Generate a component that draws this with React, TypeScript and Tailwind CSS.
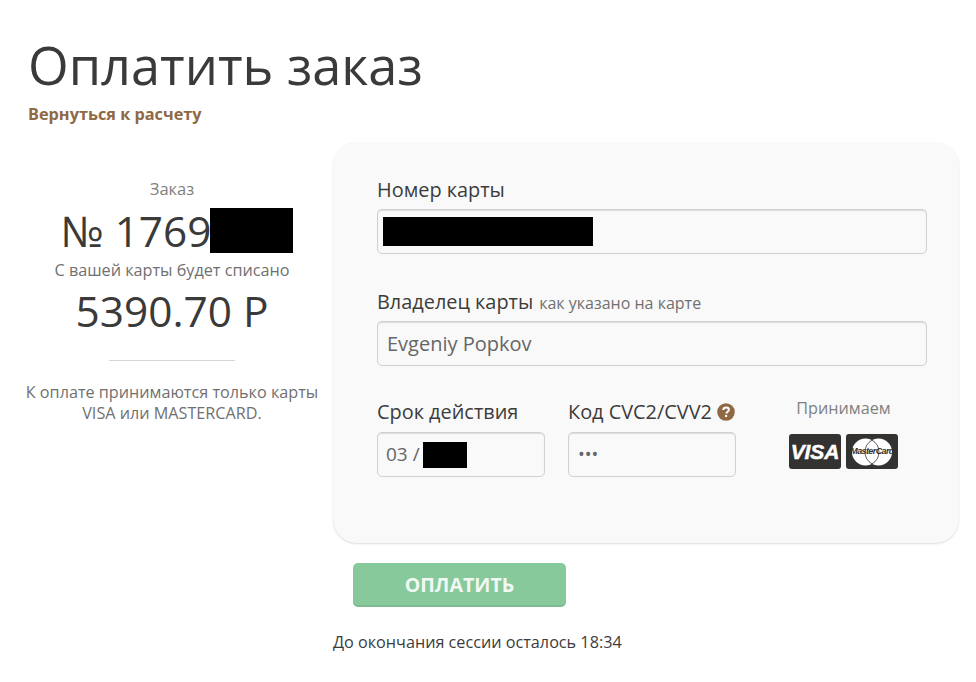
const Redact = ({ className }: { className: string }) => <div className={`bg-black ${className}`} />;

function Field({ children, className }: { children: React.ReactNode; className: string }) {
  return (
    <div className={`flex h-[45px] items-center rounded-[5px] border border-[#d0d0d0] bg-[#f9f9f9] shadow-[inset_0_1px_1px_rgba(0,0,0,0.12)] ${className}`}>
      {children}
    </div>
  );
}

function VisaCard() {
  return (
    <div className="flex h-[35px] w-[52px] items-center justify-center rounded-[3px] bg-[#333231]">
      <span className="text-[21px] leading-none font-bold italic tracking-[-0.1px] text-white [-webkit-text-stroke:0.5px_white] font-['Liberation_Sans',sans-serif]">VISA</span>
    </div>
  );
}

function MasterCard() {
  return (
    <div className="relative flex h-[35px] w-[52px] items-center justify-center rounded-[3px] bg-[#333231]">
      <svg width="44" height="30" viewBox="0 0 44 30" className="absolute">
        <circle cx="15.5" cy="15" r="13.5" fill="#fff" />
        <circle cx="28.5" cy="15" r="13.5" fill="#fff" />
        <path d="M22 3.2a13.5 13.5 0 0 1 0 23.6a13.5 13.5 0 0 1 0-23.6z" fill="#fff" stroke="#333231" strokeWidth="0.8" />
      </svg>
      <span className="relative text-[9px] leading-none font-bold italic tracking-[-0.6px] text-[#333231] font-['Liberation_Sans',sans-serif]">MasterCard</span>
    </div>
  );
}

export default function App() {
  return (
    <div className="min-h-[682px] w-[976px] bg-white font-['Open_Sans',sans-serif] text-[#3c3c3c]">
      <div className="pl-[28px] pt-[29px]">
        <h1 className="text-[52.3px] leading-[71px] font-normal text-[#3a3a3a]">Оплатить заказ</h1>
        <a className="mt-[3px] block text-[16.3px] leading-[22px] font-bold text-[#8f6844]">Вернуться к расчету</a>
      </div>

      <div className="mt-[17px] flex items-start pl-[16px]">
        <div className="flex w-[312px] flex-col items-center pt-[37px] text-center">
          <div className="text-[16.5px] leading-[20px] text-[#808080]">Заказ</div>
          <div className="mt-[9px] flex h-[45px] w-full items-center justify-center pl-[10px]">
            <span className="text-[42.3px] leading-[45px] text-[#3a3a3a]">№ 1769</span>
            <Redact className="h-[45px] w-[83px] -ml-[1px]" />
          </div>
          <div className="mt-[7px] text-[16.2px] leading-[20px] text-[#707070]">С вашей карты будет списано</div>
          <div className="mt-[4px] text-[42.4px] leading-[54px] text-[#3a3a3a]">5390.70 Р</div>
          <div className="mt-[22px] h-px w-[126px] bg-[#d5d5d5]" />
          <div className="mt-[21px] text-[16.2px] leading-[21px] text-[#707070]">
            К оплате принимаются только карты
            <br />
            VISA или MASTERCARD.
          </div>
        </div>

        <div className="ml-[5px]">
          <div className="h-[401px] w-[626px] rounded-[24px] bg-[#f9f9f9] pl-[44px] pt-[34px] shadow-[0_1px_2px_rgba(0,0,0,0.14)]">
            <div className="text-[19.9px] leading-[27px]">Номер карты</div>
            <Field className="mt-[6px] w-[550px] pl-[5px]">
              <Redact className="h-[29px] w-[210px]" />
            </Field>

            <div className="mt-[34px] flex h-[27px] items-baseline">
              <span className="text-[19.9px] leading-[27px]">Владелец карты</span>
              <span className="ml-[6px] text-[16px] text-[#707070]">как указано на карте</span>
            </div>
            <Field className="mt-[6px] w-[550px] pl-[9px] text-[20px] text-[#666666]">Evgeniy Popkov</Field>

            <div className="mt-[32px] flex">
              <div className="w-[191px]">
                <div className="text-[19.9px] leading-[27px]">Срок действия</div>
                <Field className="mt-[7px] w-[168px] pl-[8px] text-[19px] text-[#666666]">
                  <span>03 /</span>
                  <Redact className="ml-[3px] h-[26px] w-[44px]" />
                </Field>
              </div>
              <div className="w-[220px]">
                <div className="flex items-center text-[19.9px] leading-[27px]">
                  Код CVC2/CVV2
                  <svg width="18" height="18" viewBox="0 0 17 17" className="ml-[5px]">
                    <circle cx="8.5" cy="8.5" r="8.3" fill="#8f6844" />
                    <path d="M5.9 6.6c.1-1.5 1.2-2.4 2.7-2.4s2.6.9 2.6 2.1c0 1-.6 1.5-1.3 2-.6.4-.9.7-.9 1.5" fill="none" stroke="#fff" strokeWidth="1.9" />
                    <rect x="7.6" y="11.2" width="2" height="2" fill="#fff" />
                  </svg>
                </div>
                <Field className="mt-[7px] w-[168px] pl-[9px] text-[18px] text-[#666666]">•••</Field>
              </div>
              <div className="ml-[1px] flex flex-col items-center">
                <div className="text-[16.2px] leading-[20px] text-[#808080]">Принимаем</div>
                <div className="mt-[16px] flex gap-[5px]">
                  <VisaCard />
                  <MasterCard />
                </div>
              </div>
            </div>
          </div>

          <button className="ml-[20px] mt-[20px] flex h-[44px] w-[213px] items-center justify-center rounded-[5px] bg-[#88c99b] text-[19.6px] font-bold text-[#f1f8f3] shadow-[inset_0_-2px_0_rgba(0,0,0,0.07)]">
            ОПЛАТИТЬ
          </button>
          <div className="mt-[24px] text-[16.2px] leading-[22px]">До окончания сессии осталось 18:34</div>
        </div>
      </div>
    </div>
  );
}
